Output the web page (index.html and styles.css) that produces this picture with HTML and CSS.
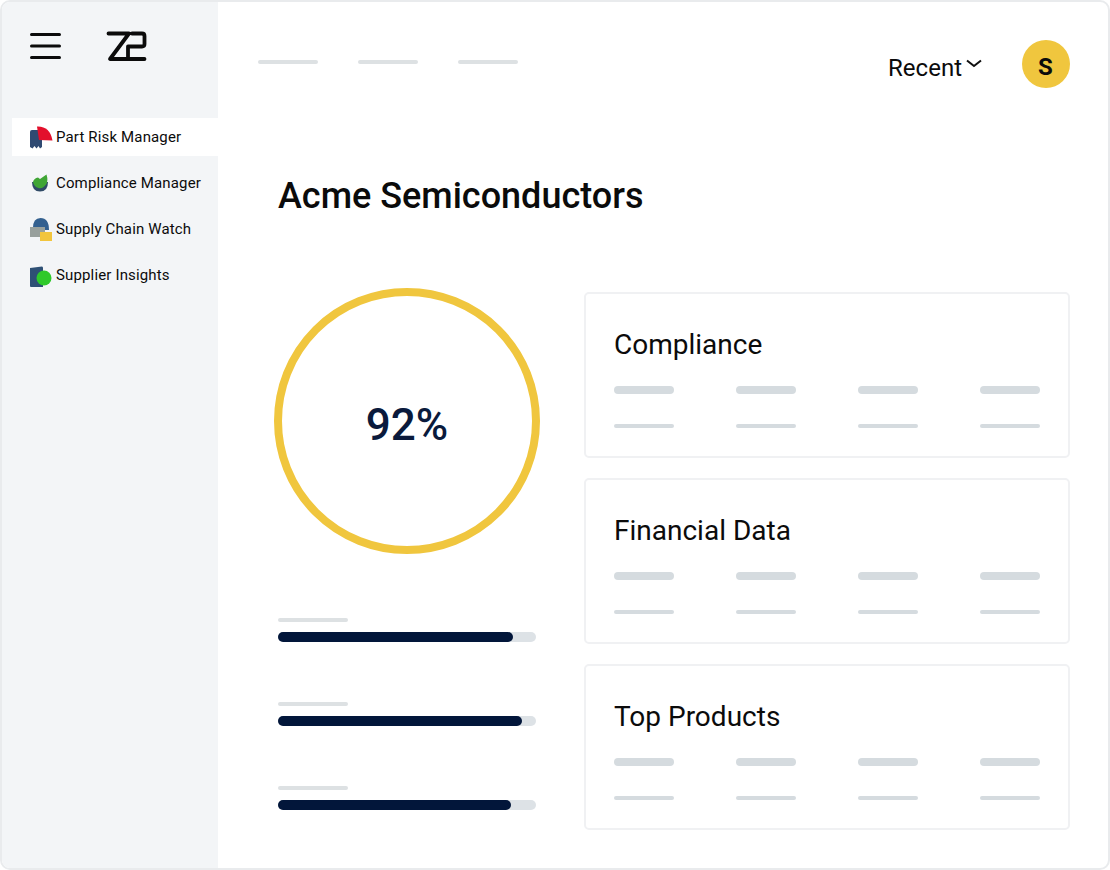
FILE: index.html
```html
<!DOCTYPE html>
<html lang="en">
<head>
  <meta charset="UTF-8" />
  <title>Acme Semiconductors</title>
  <link rel="stylesheet" href="styles.css">
</head>
<body>
  <div class="frame">

    <aside class="sidebar">
      <div class="brand">
        <svg class="menu-icon" width="32" height="26" viewBox="0 0 32 26">
          <path d="M1.5 1.500H29.500M1.500 13H29.500M1.500 24.500H29.500" fill="none" stroke="#0b0b0b" stroke-width="3" stroke-linecap="round"/>
        </svg>
        <svg class="logo" width="42" height="32" viewBox="0 0 42 32">
          <path d="M2.500 3.500H23L4 29H38.500M26 3.500H36Q38.500 3.500 38.500 6V14Q38.500 16.500 36 16.500H22V29" fill="none" stroke="#0b0b0b" stroke-width="3.800" stroke-linecap="round" stroke-linejoin="round"/>
        </svg>
      </div>

      <nav class="nav">
        <div class="nav-item active">
          <svg width="24" height="24" viewBox="0 0 24 24">
            <path d="M0 7Q0 5 2 5H12V22L10 23.500L8.500 21L6.500 23.500L4.500 21L2.500 23.500L0 22Z" fill="#2f4a72"/>
            <path d="M7 1.500Q20 1 22.500 15.500L9 15Z" fill="#e3102c"/>
          </svg>
          <span>Part Risk Manager</span>
        </div>
        <div class="nav-item">
          <svg width="24" height="24" viewBox="0 0 24 24">
            <path d="M2 11H18Q18 20.500 10 20.500Q2 20.500 2 11Z" fill="#2f4a66"/>
            <path d="M3 11Q4 7 8 6.500L10 8L16.500 3.500Q18.500 10 16 13.500Q13 18 8.500 17Q4 16 3 11Z" fill="#3fa535"/>
          </svg>
          <span>Compliance Manager</span>
        </div>
        <div class="nav-item">
          <svg width="24" height="24" viewBox="0 0 24 24">
            <path d="M3 11Q3 1 10.500 1Q19 1 19 13H3Z" fill="#33608f"/>
            <path d="M0 10H15V20H0Z" fill="#98a09c"/>
            <path d="M10 15H22V24H10Z" fill="#f2c53d"/>
          </svg>
          <span>Supply Chain Watch</span>
        </div>
        <div class="nav-item">
          <svg width="24" height="24" viewBox="0 0 24 24">
            <path d="M0 5L12 3.500Q13 3.500 13 5V24H1Q0 24 0 23Z" fill="#2e5075"/>
            <circle cx="14" cy="15" r="7.500" fill="#2fc92b"/>
          </svg>
          <span>Supplier Insights</span>
        </div>
      </nav>
    </aside>

    <main class="main">
      <header class="topbar">
        <div class="tabs">
          <div class="tab-line"></div>
          <div class="tab-line"></div>
          <div class="tab-line"></div>
        </div>
        <div class="recent">
          <span>Recent</span>
          <svg width="16" height="9" viewBox="0 0 16 9">
            <path d="M1 1.500L8 7L15 1.500" fill="none" stroke="#111" stroke-width="2"/>
          </svg>
        </div>
        <div class="avatar">S</div>
      </header>

      <h1 class="title">Acme Semiconductors</h1>

      <div class="content">
        <section class="score">
          <div class="ring">92%</div>
          <div class="bars">
            <div class="bar-group">
              <div class="bar-label"></div>
              <div class="bar"><div class="bar-fill" style="width: 235px"></div></div>
            </div>
            <div class="bar-group">
              <div class="bar-label"></div>
              <div class="bar"><div class="bar-fill" style="width: 244px"></div></div>
            </div>
            <div class="bar-group">
              <div class="bar-label"></div>
              <div class="bar"><div class="bar-fill" style="width: 233px"></div></div>
            </div>
          </div>
        </section>

        <section class="cards">
          <div class="card">
            <h2>Compliance</h2>
            <div class="row thick"><i></i><i></i><i></i><i></i></div>
            <div class="row thin"><i></i><i></i><i></i><i></i></div>
          </div>
          <div class="card">
            <h2>Financial Data</h2>
            <div class="row thick"><i></i><i></i><i></i><i></i></div>
            <div class="row thin"><i></i><i></i><i></i><i></i></div>
          </div>
          <div class="card">
            <h2>Top Products</h2>
            <div class="row thick"><i></i><i></i><i></i><i></i></div>
            <div class="row thin"><i></i><i></i><i></i><i></i></div>
          </div>
        </section>
      </div>
    </main>

  </div>
</body>
</html>
```

FILE: styles.css
```css
html, body {
  margin: 0;
  background: #fff;
}
body {
  font-family: 'Roboto', 'Liberation Sans', sans-serif;
  color: #0b0b0b;
}
.frame {
  box-sizing: border-box;
  width: 1110px;
  height: 870px;
  display: flex;
  border: 2px solid #e9ebed;
  border-radius: 10px;
  overflow: hidden;
}

/* sidebar */
.sidebar {
  width: 216px;
  flex: none;
  background: #f3f5f7;
}
.brand {
  display: flex;
  align-items: center;
  padding: 18px 0 0 28px;
  height: 54px;
}
.menu-icon { margin-top: -2px; }
.logo { margin-left: 44px; margin-top: -2px; }
.nav {
  margin: 44px 0 0 10px;
  display: flex;
  flex-direction: column;
  gap: 8px;
}
.nav-item {
  height: 38px;
  display: flex;
  align-items: center;
  gap: 2px;
  padding-left: 18px;
  font-size: 15px;
  letter-spacing: 0.15px;
}
.nav-item svg { flex: none; }
.nav-item.active { background: #fff; }

/* top */
.main {
  flex: 1;
  padding: 0 38px 0 40px;
}
.topbar {
  height: 86px;
  padding-top: 38px;
  box-sizing: border-box;
  display: flex;
  align-items: flex-start;
}
.tabs {
  display: flex;
  gap: 40px;
  margin-top: 20px;
}
.tab-line {
  width: 60px;
  height: 4px;
  border-radius: 2px;
  background: #dde1e3;
}
.recent {
  margin-left: auto;
  margin-top: 12px;
  display: flex;
  align-items: flex-start;
  gap: 4px;
  font-size: 24px;
  line-height: 32px;
}
.recent svg { margin-top: 7px; }
.avatar {
  width: 48px;
  height: 48px;
  margin-left: 40px;
  border-radius: 50%;
  background: #f0c63e;
  display: flex;
  align-items: center;
  justify-content: center;
  padding: 6px 1px 0 0;
  box-sizing: border-box;
  font-size: 24px;
  font-weight: 700;
}
.title {
  margin: 85px 0 0 20px;
  font-size: 36px;
  line-height: 46px;
  font-weight: 500;
}

/* content */
.content {
  display: flex;
  margin-top: 73px;
}
.score {
  width: 310px;
  flex: none;
  margin-left: 16px;
}
.ring {
  box-sizing: border-box;
  width: 266px;
  height: 266px;
  margin-top: -4px;
  border: 8px solid #f0c63e;
  border-radius: 50%;
  display: flex;
  align-items: center;
  justify-content: center;
  padding-top: 8px;
  font-size: 44px;
  font-weight: 500;
  color: #0a1a3c;
}
.bars {
  margin: 64px 0 0 4px;
  display: flex;
  flex-direction: column;
  gap: 60px;
}
.bar-label {
  width: 70px;
  height: 4px;
  border-radius: 2px;
  background: #dde1e3;
  margin-bottom: 10px;
}
.bar {
  width: 258px;
  height: 10px;
  border-radius: 5px;
  background: #dde2e6;
}
.bar-fill {
  height: 10px;
  border-radius: 5px;
  background: #02163a;
}

.cards {
  flex: 1;
  display: flex;
  flex-direction: column;
  gap: 20px;
}
.card {
  box-sizing: border-box;
  height: 166px;
  border: 2px solid #f0f1f3;
  border-radius: 5px;
  padding: 31px 28px 0;
}
.card h2 {
  margin: 0;
  font-size: 28px;
  line-height: 40px;
  font-weight: 400;
}
.row {
  display: flex;
  justify-content: space-between;
}
.row i { display: block; width: 60px; }
.thick { margin-top: 21px; }
.thick i {
  height: 8px;
  border-radius: 4px;
  background: #d5dbdf;
}
.thin { margin-top: 30px; }
.thin i {
  height: 4px;
  border-radius: 2px;
  background: #d5dbdf;
}
```
